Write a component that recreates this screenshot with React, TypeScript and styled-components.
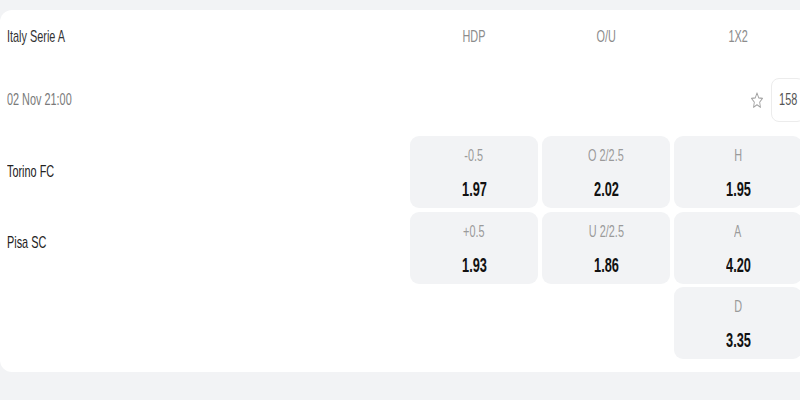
import React from 'react';
import styled, { createGlobalStyle } from 'styled-components';

const GlobalStyle = createGlobalStyle`
  html, body {
    margin: 0;
    padding: 0;
    background: #f2f3f5;
    overflow: hidden;
  }
  body {
    font-family: "Liberation Sans", Arial, sans-serif;
  }
`;

interface Odd {
  label: string;
  value: string;
}

const markets: { title: string; odds: Odd[] }[] = [
  {
    title: 'HDP',
    odds: [
      { label: '-0.5', value: '1.97' },
      { label: '+0.5', value: '1.93' },
    ],
  },
  {
    title: 'O/U',
    odds: [
      { label: 'O 2/2.5', value: '2.02' },
      { label: 'U 2/2.5', value: '1.86' },
    ],
  },
  {
    title: '1X2',
    odds: [
      { label: 'H', value: '1.95' },
      { label: 'A', value: '4.20' },
      { label: 'D', value: '3.35' },
    ],
  },
];

const teams = ['Torino FC', 'Pisa SC'];

const StarIcon: React.FC = () => (
  <svg width="14" height="19" viewBox="0 0 24 24" preserveAspectRatio="none" fill="none">
    <path
      d="M12 2.5l2.9 6.1 6.6.8-4.9 4.6 1.3 6.6L12 17.3l-5.9 3.3 1.3-6.6-4.9-4.6 6.6-.8z"
      stroke="#a0a0a0"
      strokeWidth="1.5"
      strokeLinejoin="round"
    />
  </svg>
);

const App: React.FC = () => (
  <>
    <GlobalStyle />
    <Page>
      <Card>
        <HeaderRow>
          <League>
            <Squeeze $origin="left">Italy Serie A</Squeeze>
          </League>
          <MarketHeads>
            {markets.map((m) => (
              <MarketHead key={m.title}>
                <Squeeze>{m.title}</Squeeze>
              </MarketHead>
            ))}
          </MarketHeads>
        </HeaderRow>

        <DateRow>
          <DateText>
            <Squeeze $origin="left">02 Nov 21:00</Squeeze>
          </DateText>
          <Actions>
            <StarIcon />
            <CountBox>
              <Squeeze>158</Squeeze>
            </CountBox>
          </Actions>
        </DateRow>

        <Body>
          <Teams>
            {teams.map((t) => (
              <Team key={t}>
                <Squeeze $origin="left">{t}</Squeeze>
              </Team>
            ))}
          </Teams>
          <Markets>
            {markets.map((m) => (
              <MarketColumn key={m.title}>
                {m.odds.map((o) => (
                  <OddCell key={o.label}>
                    <OddLabel>
                      <Squeeze>{o.label}</Squeeze>
                    </OddLabel>
                    <OddValue>
                      <Squeeze>{o.value}</Squeeze>
                    </OddValue>
                  </OddCell>
                ))}
              </MarketColumn>
            ))}
          </Markets>
        </Body>
      </Card>
    </Page>
  </>
);

export default App;

const Page = styled.div`
  width: 800px;
  height: 400px;
  padding-top: 10px;
  box-sizing: border-box;
`;

const Card = styled.div`
  width: 812px;
  box-sizing: border-box;
  background: #ffffff;
  border-radius: 12px;
  padding: 0 7px 13px 7px;
`;

// the whole screenshot is narrow-set, so every text run is squeezed sideways
const Squeeze = styled.span<{ $origin?: string }>`
  display: inline-block;
  white-space: nowrap;
  transform: scaleX(0.64);
  transform-origin: ${(p) => p.$origin ?? 'center'};
`;

const HeaderRow = styled.div`
  display: flex;
  align-items: center;
  height: 54px;
`;

const League = styled.div`
  flex: 1;
  font-size: 17px;
  color: #333333;
`;

const MarketHeads = styled.div`
  display: flex;
  gap: 4px;
  margin-right: 3px;
`;

const MarketHead = styled.div`
  width: 128px;
  text-align: center;
  font-size: 17px;
  color: #8c8c8c;
`;

const DateRow = styled.div`
  display: flex;
  align-items: center;
  justify-content: space-between;
  height: 72px;
`;

const DateText = styled.div`
  font-size: 17px;
  color: #7a7a7a;
`;

const Actions = styled.div`
  display: flex;
  align-items: center;
  gap: 7px;
`;

const CountBox = styled.div`
  width: 34px;
  height: 44px;
  box-sizing: border-box;
  border: 1px solid #ececec;
  border-radius: 8px;
  display: flex;
  align-items: center;
  justify-content: center;
  font-size: 17px;
  color: #555555;
`;

const Body = styled.div`
  display: flex;
`;

const Teams = styled.div`
  flex: 1;
  display: flex;
  flex-direction: column;
`;

const Team = styled.div`
  height: 71px;
  display: flex;
  align-items: center;
  font-size: 17px;
  color: #222222;
`;

const Markets = styled.div`
  display: flex;
  align-items: flex-start;
  gap: 4px;
  margin-right: 3px;
`;

const MarketColumn = styled.div`
  width: 128px;
  display: flex;
  flex-direction: column;
  gap: 3.5px;
`;

const OddCell = styled.div`
  height: 72px;
  box-sizing: border-box;
  background: #f2f3f5;
  border-radius: 9px;
  padding-top: 10px;
  display: flex;
  flex-direction: column;
  align-items: center;
`;

const OddLabel = styled.div`
  height: 20px;
  line-height: 20px;
  font-size: 17px;
  color: #9a9a9a;
`;

const OddValue = styled.div`
  margin-top: 11px;
  height: 24px;
  line-height: 24px;
  font-size: 20px;
  font-weight: 700;
  color: #111111;
`;
